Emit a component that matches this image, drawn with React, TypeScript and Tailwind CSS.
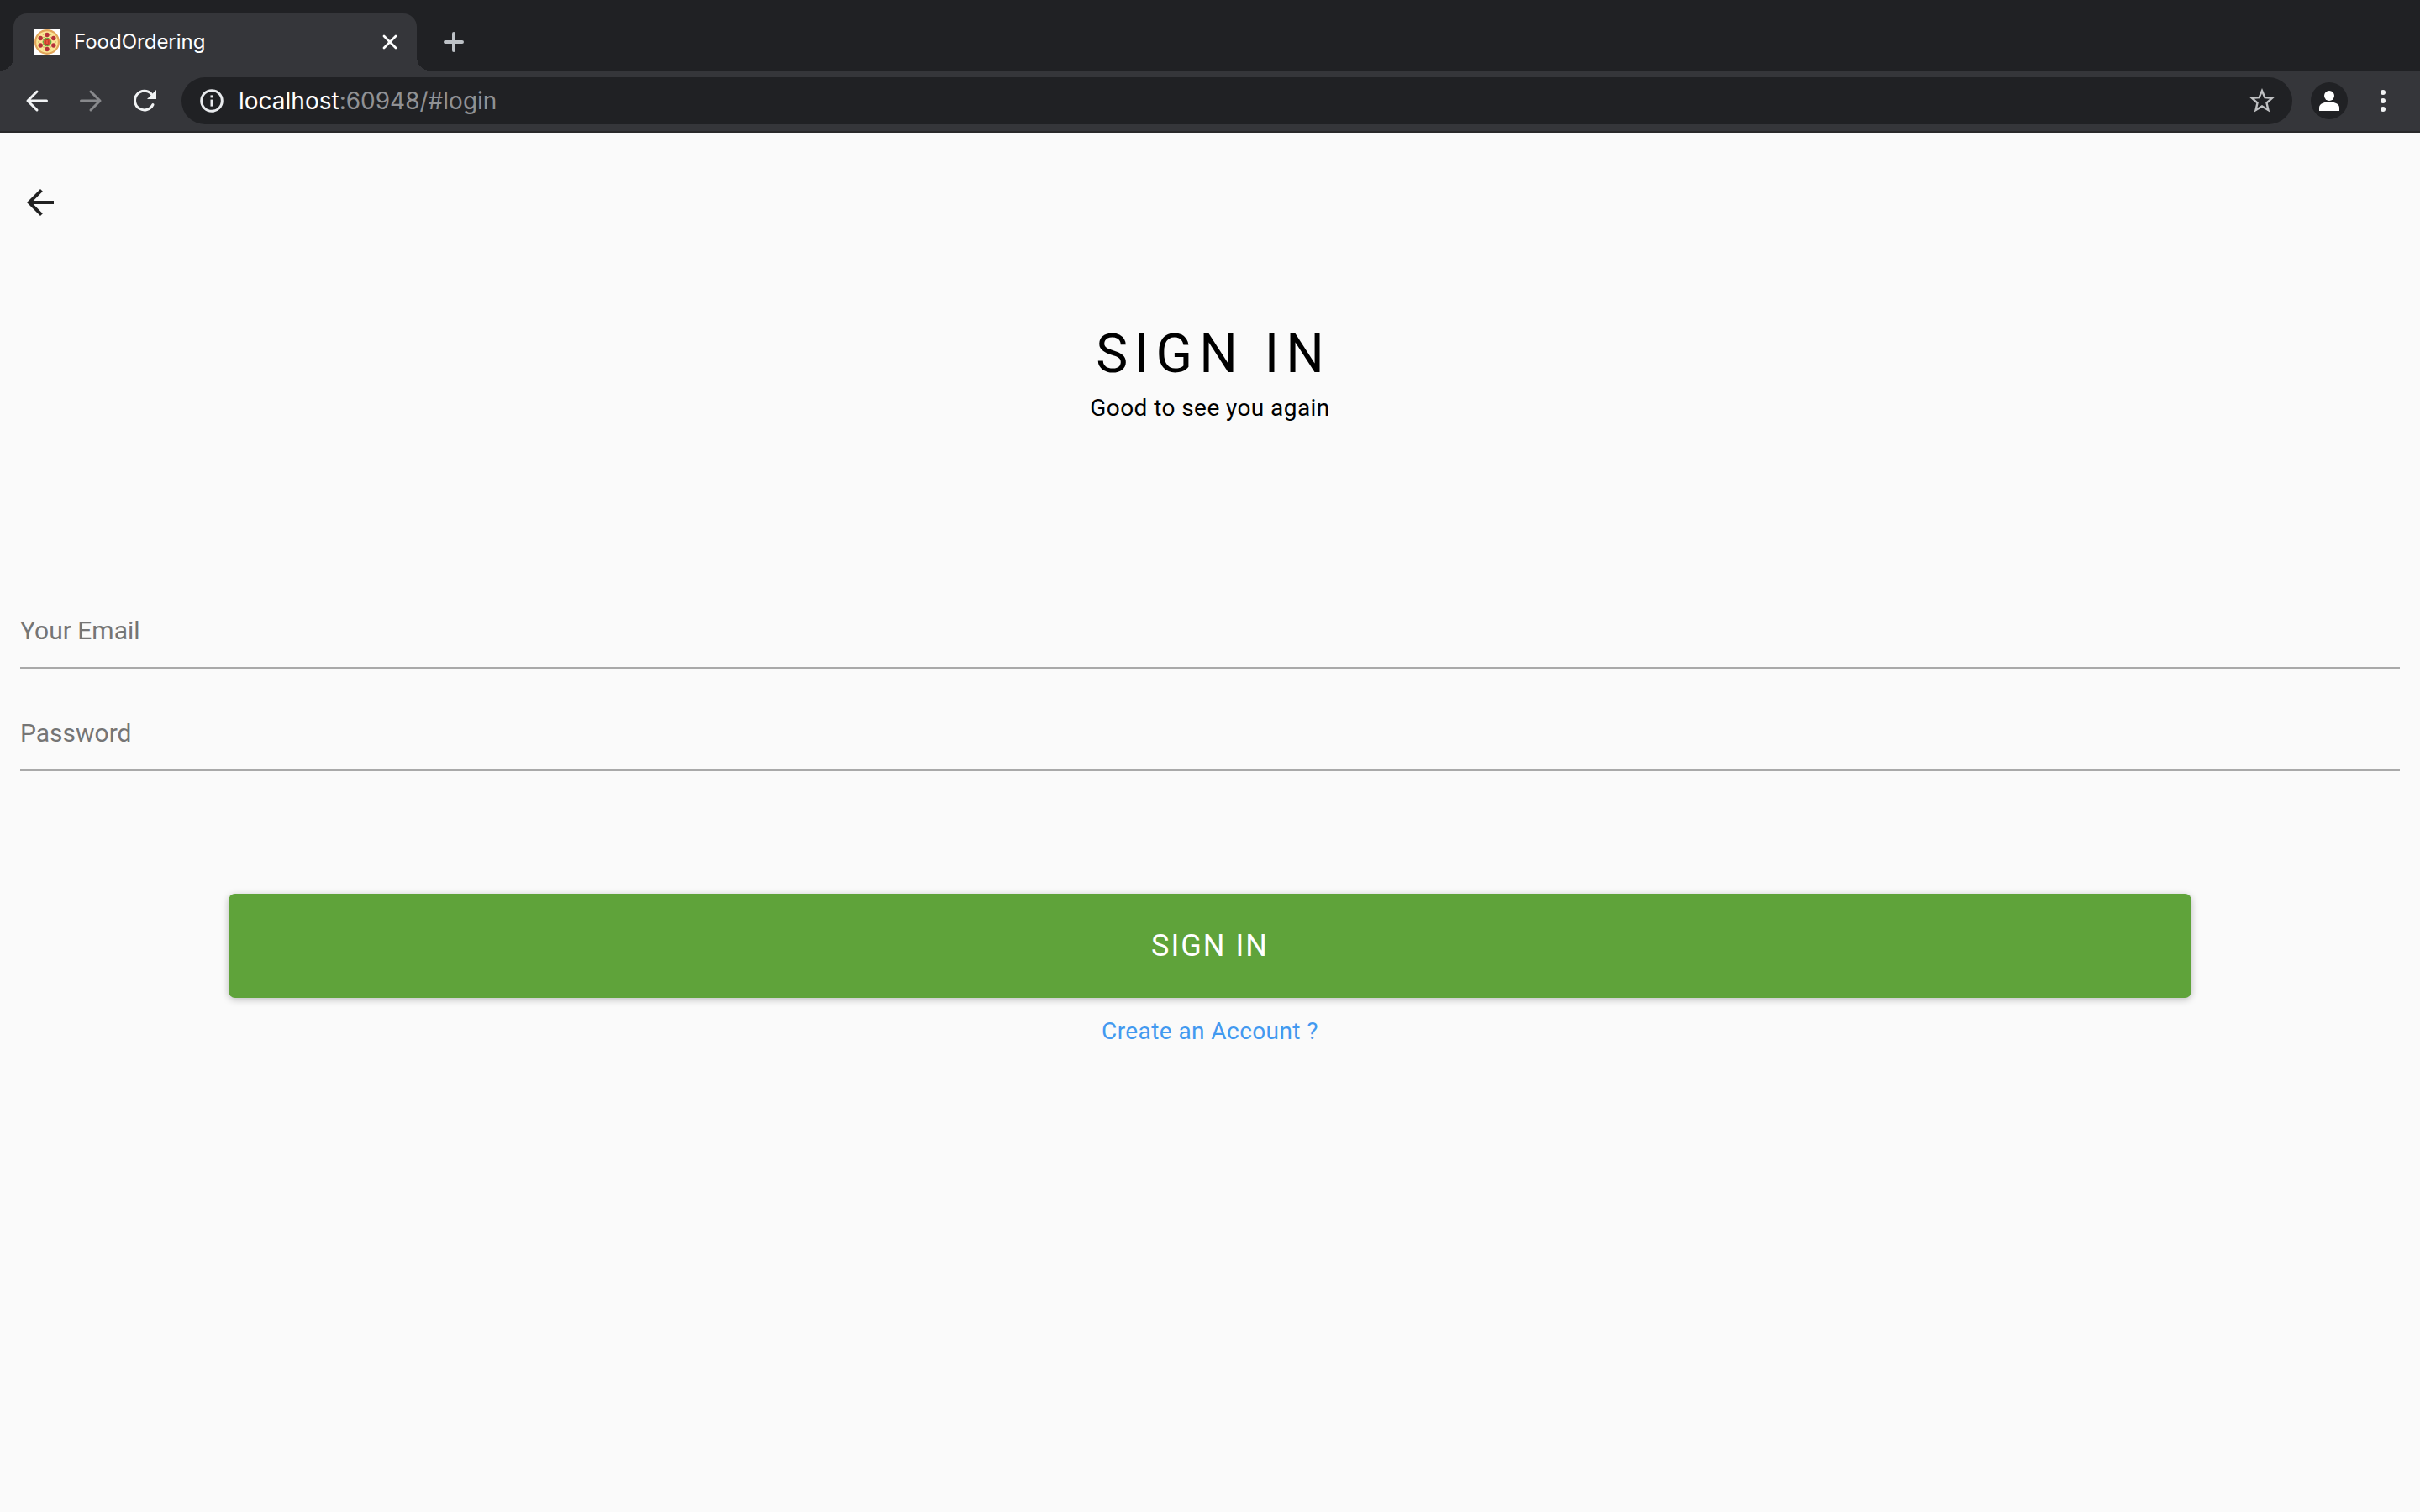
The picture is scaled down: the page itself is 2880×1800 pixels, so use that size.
import React from "react";

function PizzaIcon() {
  const pepperoni = [
    [16, 7.5],
    [23.8, 11.5],
    [23.8, 20],
    [16, 24.5],
    [8.2, 20],
    [8.2, 11.5],
  ];
  const crumbs = [
    [11.5, 7], [20.5, 7], [6, 16], [26, 16], [11.5, 25.5], [20.5, 25.5], [12, 10.5], [20, 10.5], [12, 22], [20, 22],
  ];
  return (
    <svg viewBox="0 0 32 32" className="size-8 shrink-0" aria-hidden="true">
      <rect width="32" height="32" fill="#fff" />
      <circle cx="16" cy="16" r="15" fill="#e2a55a" />
      <circle cx="16" cy="16" r="12.8" fill="#fbe595" />
      {crumbs.map(([x, y]) => (
        <circle key={`c${x}-${y}`} cx={x} cy={y} r="0.8" fill="#b9a95c" />
      ))}
      {pepperoni.map(([x, y]) => (
        <circle key={`p${x}-${y}`} cx={x} cy={y} r="2.7" fill="#b5303a" />
      ))}
      <circle cx="16" cy="16" r="4.7" fill="#e8553c" stroke="#5fae3c" strokeWidth="1.3" strokeDasharray="2.2 0.5" />
      <rect x="14.2" y="13.5" width="3.6" height="5" rx="0.8" fill="none" stroke="#b33a2b" strokeWidth="1" />
    </svg>
  );
}

function TabStrip() {
  return (
    <div className="flex h-21 items-end bg-[#202124]">
      <div className="relative ml-4 flex h-17 w-120 items-center rounded-t-2xl bg-[#35363a] pr-5 pl-6">
        <span className="absolute bottom-0 -left-4 size-4 bg-[radial-gradient(circle_at_0_0,#202124_16px,#35363a_16px)]" />
        <span className="absolute -right-4 bottom-0 size-4 bg-[radial-gradient(circle_at_100%_0,#202124_16px,#35363a_16px)]" />
        <PizzaIcon />
        <span className="ml-4 flex-1 text-2xl text-white">FoodOrdering</span>
        <button type="button" aria-label="Close tab" className="flex size-6 items-center justify-center">
          <svg viewBox="0 0 24 24" className="size-6" stroke="#fff" strokeWidth="2.8" strokeLinecap="round">
            <path d="M5 5l14 14M19 5L5 19" />
          </svg>
        </button>
      </div>
      <button type="button" aria-label="New tab" className="ml-7 flex h-17 w-8 items-center justify-center">
        <svg viewBox="0 0 32 32" className="size-8" stroke="#bdc1c6" strokeWidth="4" strokeLinecap="round">
          <path d="M16 6v20M6 16h20" />
        </svg>
      </button>
    </div>
  );
}

function Toolbar() {
  return (
    <div className="flex h-18 items-center bg-[#35363a]">
      <button type="button" aria-label="Back" className="ml-7 size-8">
        <svg viewBox="0 0 32 32" className="size-8" fill="none" stroke="#f1f3f4" strokeWidth="3" strokeLinecap="round" strokeLinejoin="round">
          <path d="M27.500 16H5M16 5L5 16l11 11" />
        </svg>
      </button>
      <button type="button" aria-label="Forward" disabled className="ml-8 size-8">
        <svg viewBox="0 0 32 32" className="size-8" fill="none" stroke="#88898c" strokeWidth="3" strokeLinecap="round" strokeLinejoin="round">
          <path d="M4.500 16H27M16 5l11 11-11 11" />
        </svg>
      </button>
      <button type="button" aria-label="Reload" className="ml-8 size-8">
        <svg viewBox="0 0 32 32" className="size-8">
          <path d="M26 20.500A11.300 11.300 0 1 1 24.200 8" fill="none" stroke="#f1f3f4" strokeWidth="3" strokeLinecap="round" />
          <path d="M30 3v11H19z" fill="#f1f3f4" />
        </svg>
      </button>
      <div className="ml-7 flex h-14 flex-1 items-center rounded-full bg-[#202124] pr-4.5 pl-5">
        <button type="button" aria-label="View site information" className="size-8">
          <svg viewBox="0 0 32 32" className="size-8" fill="none">
            <circle cx="16" cy="16" r="12.300" stroke="#e8eaed" strokeWidth="3" />
            <rect x="14.500" y="14.600" width="3" height="8" fill="#e8eaed" />
            <rect x="14.500" y="9.400" width="3" height="3" fill="#e8eaed" />
          </svg>
        </button>
        <div
          role="textbox"
          aria-label="Address"
          contentEditable
          suppressContentEditableWarning
          spellCheck={false}
          className="ml-4 flex-1 text-[28px] leading-9 text-[#909194] outline-none"
        >
          <span className="text-white">localhost</span>:60948/#login
        </div>
        <button type="button" aria-label="Bookmark this tab" className="size-9">
          <svg viewBox="0 0 24 24" className="size-9" fill="#bfc0c2">
            <path d="M22 9.240l-7.190-.620L12 2 9.190 8.630 2 9.240l5.460 4.730L5.820 21 12 17.270 18.180 21l-1.630-7.030L22 9.240zM12 15.400l-3.760 2.270 1-4.280-3.320-2.880 4.380-.380L12 6.100l1.710 4.040 4.380.380-3.320 2.880 1 4.280L12 15.400z" />
          </svg>
        </button>
      </div>
      <button type="button" aria-label="Profile" className="ml-5 size-12">
        <svg viewBox="0 0 48 48" className="size-12">
          <circle cx="24" cy="24" r="22" fill="#202124" />
          <circle cx="24" cy="18" r="6" fill="#fff" />
          <path d="M12 36v-4c0-5 8-7 12-7s12 2 12 7v4z" fill="#fff" />
        </svg>
      </button>
      <button type="button" aria-label="Browser menu" className="mr-7 ml-6 flex size-8 flex-col items-center justify-center gap-1">
        <span className="size-1.5 rounded-full bg-[#f1f3f4]" />
        <span className="size-1.5 rounded-full bg-[#f1f3f4]" />
        <span className="size-1.5 rounded-full bg-[#f1f3f4]" />
      </button>
    </div>
  );
}

function Field({ label, type }: { label: string; type: string }) {
  return (
    <div className="border-b-2 border-[#a9a9a9] pt-7 pb-5">
      <input
        type={type}
        aria-label={label}
        placeholder={label}
        className="block h-12 w-full bg-transparent text-[30px] text-black outline-none placeholder:text-[#757575]"
      />
    </div>
  );
}

export default function App() {
  return (
    <div className="min-h-screen bg-[#fafafa]">
      <header className="border-b-2 border-[#29292b] font-['Inter',sans-serif]">
        <TabStrip />
        <Toolbar />
      </header>
      <main className="px-6 pt-[59px] font-['Roboto',sans-serif]">
        <button type="button" aria-label="Go back" className="block size-12">
          <svg viewBox="0 0 24 24" className="size-12" fill="#212121">
            <path d="M20 11H7.830l5.590-5.590L12 4l-8 8 8 8 1.410-1.410L7.830 13H20v-2z" />
          </svg>
        </button>
        <form onSubmit={(event) => event.preventDefault()}>
          <div className="pt-[119px] text-center text-black">
            <h1 className="pl-2 text-[64px] leading-19 tracking-[8px]">SIGN IN</h1>
            <p className="mt-2.5 text-[28px] leading-8 tracking-[0.015em]">Good to see you again</p>
          </div>
          <div className="mt-49 flex flex-col gap-6">
            <Field label="Your Email" type="email" />
            <Field label="Password" type="password" />
          </div>
          <div className="mt-[146px] px-62">
            <button
              type="submit"
              className="flex h-31 w-full items-center justify-center rounded-lg bg-[#5fa33a] text-4xl tracking-[2px] text-white shadow-[0_2px_8px_rgba(0,0,0,0.25)]"
            >
              SIGN IN
            </button>
          </div>
          <p className="mt-6 text-center text-[28px] leading-8 tracking-[0.015em]">
            <a href="#register" className="text-[#4299f0]">
              Create an Account ?
            </a>
          </p>
        </form>
      </main>
    </div>
  );
}
